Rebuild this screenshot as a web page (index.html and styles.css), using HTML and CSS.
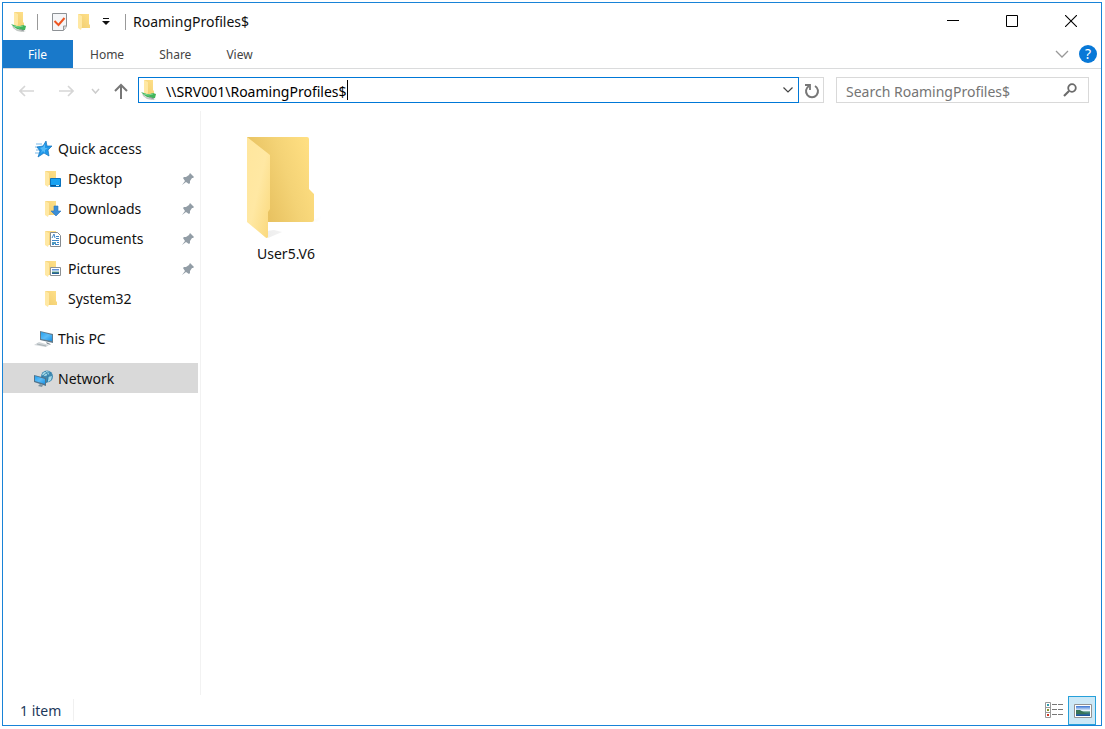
FILE: index.html
```html
<!DOCTYPE html>
<html lang="en">
<head>
<meta charset="utf-8">
<meta name="viewport" content="width=device-width, initial-scale=1">
<title>RoamingProfiles$</title>
<link rel="stylesheet" href="styles.css">
</head>
<body>
<svg class="defs" aria-hidden="true">
  <defs>
    <linearGradient id="back" x1="0" y1="1" x2="1" y2="0"><stop offset="0" stop-color="#f0cd6e"/><stop offset="1" stop-color="#ffe08a"/></linearGradient>
    <linearGradient id="back-large" x1="0" y1=".7" x2="1" y2=".3"><stop offset=".2" stop-color="#e8c261"/><stop offset=".6" stop-color="#f4d376"/><stop offset="1" stop-color="#ffdf82"/></linearGradient>
    <linearGradient id="front" x1="0" y1="0" x2="1" y2="1"><stop offset="0" stop-color="#ffe69d"/><stop offset=".5" stop-color="#ffe8a3"/><stop offset="1" stop-color="#fad87b"/></linearGradient>
    <linearGradient id="shade" x1="0" x2="1"><stop offset="0" stop-color="#d4d4d4"/><stop offset="1" stop-color="#fff"/></linearGradient>
    <linearGradient id="screen" x1="0" y1="0" x2="1" y2="1"><stop offset="0" stop-color="#25a0ef"/><stop offset=".5" stop-color="#5cbcf7"/><stop offset="1" stop-color="#1691e6"/></linearGradient>
    <linearGradient id="sky" x1="0" y1="0" x2="0" y2="1"><stop offset="0" stop-color="#3973d1"/><stop offset=".45" stop-color="#e8f5ff"/><stop offset=".6" stop-color="#4d9175"/><stop offset="1" stop-color="#164da5"/></linearGradient>
    <symbol id="folder" viewBox="0 0 18 18">
      <path d="M1 1h11v10l1 1v3H4z" fill="url(#back)"/>
      <path d="M1 1l4 2v11l-1 3-3-2z" fill="#ffe8a3"/>
    </symbol>
    <symbol id="share" viewBox="0 0 18 20">
      <path d="M3 0h9v10l1 1v3H6z" fill="url(#back)"/>
      <path d="M3 0l4 2v10l-1 3-3-2z" fill="#ffe8a3"/>
      <path d="M1 13l4 4 5 1 5 1-4 1-5-1-4-3z" fill="#c3c8c5"/>
      <path d="M0 12l3 1 3 1 3 0 3-1 3 1-1 4-3 0-5-1-3-2z" fill="#42b55c"/>
      <path d="M3 14l4 1 5-1" fill="none" stroke="#82d893"/>
      <path d="M8 17l5 2" stroke="#92999c"/>
    </symbol>
    <symbol id="pin" viewBox="0 0 14 14">
      <path d="M9 1l4 4-1 1-1 0-2 3v2l-1 1-3-2-4 3 3-4-2-3 1-1h2l3-2z" fill="#929da6"/>
    </symbol>
  </defs>
</svg>
<div class="window">
  <header class="titlebar">
    <div class="quickbar">
      <svg class="share-icon" aria-hidden="true"><use href="#share"/></svg>
      <span class="rule"></span>
      <button class="plain properties" aria-label="Properties">
        <svg width="16" height="18" viewBox="0 0 16 18"><path d="M.5.5h14v13l-3 4H.5z" fill="#f5f6f8" stroke="#8d9195"/><path d="M11.500 17v-4H15" fill="#ddd" stroke="#999"/><path d="M2.500 8l4 4 6-7" fill="none" stroke="#ee5622" stroke-width="2"/></svg>
      </button>
      <button class="plain" aria-label="New folder"><svg class="folder-icon"><use href="#folder"/></svg></button>
      <button class="plain customize" aria-label="Customize toolbar"><svg width="8" height="7" viewBox="0 0 8 7"><path d="M1 .5h6" stroke="#111"/><path d="M0 3h8L4 7z" fill="#111"/></svg></button>
      <span class="rule"></span>
    </div>
    <h1>RoamingProfiles$</h1>
    <div class="controls">
      <button class="plain" aria-label="Minimize"><svg width="12" height="12" viewBox="0 0 12 12"><path d="M0 5.500h12" stroke="#000"/></svg></button>
      <button class="plain" aria-label="Maximize"><svg width="12" height="12" viewBox="0 0 12 12"><path d="M.5.5h11v11H.5z" fill="none" stroke="#000"/></svg></button>
      <button class="plain" aria-label="Close"><svg width="12" height="12" viewBox="0 0 12 12"><path d="M0 0l12 12M12 0L0 12" stroke="#000" stroke-width="1.100"/></svg></button>
    </div>
  </header>
  <nav class="ribbon" aria-label="Ribbon">
    <button class="file">File</button>
    <button>Home</button>
    <button>Share</button>
    <button>View</button>
    <button class="plain expand" aria-label="Expand ribbon"><svg width="14" height="8" viewBox="0 0 14 8"><path d="M1 1l6 6 6-6" fill="none" stroke="#999" stroke-width="1.300"/></svg></button>
    <button class="help" aria-label="Help">?</button>
  </nav>
  <div class="navigation">
    <div class="arrows">
      <button class="plain" aria-label="Back"><svg width="16" height="12" viewBox="0 0 16 12"><path d="M15 6H1M6 1L1 6l5 5" fill="none" stroke="#d6d6d6" stroke-width="1.600"/></svg></button>
      <button class="plain" aria-label="Forward"><svg width="16" height="12" viewBox="0 0 16 12"><path d="M1 6h14M10 1l5 5-5 5" fill="none" stroke="#d6d6d6" stroke-width="1.600"/></svg></button>
      <button class="plain recent" aria-label="Recent locations"><svg width="9" height="6" viewBox="0 0 9 6"><path d="M1 1l3.500 4L8 1" fill="none" stroke="#ccc" stroke-width="1.500"/></svg></button>
      <button class="plain" aria-label="Up"><svg width="14" height="16" viewBox="0 0 14 16"><path d="M7 16V2M1 8l6-6 6 6" fill="none" stroke="#777" stroke-width="2"/></svg></button>
    </div>
    <div class="address">
      <svg class="share-icon" aria-hidden="true"><use href="#share"/></svg>
      <input class="path" type="text" aria-label="Address" value="\\SRV001\RoamingProfiles$">
      <span class="caret"></span>
      <button class="plain history" aria-label="Previous locations"><svg width="10" height="6" viewBox="0 0 10 6"><path d="M.5.5L5 5 9.500.5" fill="none" stroke="#444" stroke-width="1.200"/></svg></button>
    </div>
    <button class="refresh" aria-label="Refresh"><svg width="16" height="16" viewBox="0 0 16 16"><path d="M11 3a6 6 0 1 1-6 0" fill="none" stroke="#777" stroke-width="2"/><path d="M1 2h5v5" fill="none" stroke="#777" stroke-width="1.800"/></svg></button>
    <div class="search">
      <input type="search" aria-label="Search" placeholder="Search RoamingProfiles$">
      <button class="plain" aria-label="Search"><svg width="14" height="14" viewBox="0 0 14 14"><circle cx="9" cy="5" r="3.800" fill="none" stroke="#6b6b6b" stroke-width="1.800"/><path d="M6 8l-5 5" stroke="#6b6b6b" stroke-width="2.200"/></svg></button>
    </div>
  </div>
  <div class="content">
    <nav class="sidebar" aria-label="Locations">
      <a href="#quick" class="item">
        <svg class="icon" viewBox="0 0 18 18"><path d="M2 4h6M1 7h5M2 10h4M1 13h4" stroke="#78b9e8"/><path d="M12 1l1 5 5 0-4 4 1 6-5-3-6 4 2-6-3-4 6-1z" fill="#2097e8" stroke="#1674bd" stroke-width=".7"/><path d="M11 4l0 4 3 0-3 2v3l-2-2-2 2 1-3-2-2 3-1z" fill="#56bbf8"/></svg>
        <span>Quick access</span></a>
      <a href="#desktop" class="item child">
        <svg class="icon" viewBox="0 0 18 18"><use href="#folder" width="18" height="18"/><path d="M6.500 8.500h10v8h-10z" fill="#18a2f2" stroke="#0b73bd"/><path d="M7 15.500h9" stroke="#095694"/><path d="M12 15.500h3" stroke="#c8edff"/></svg>
        <span>Desktop</span><svg class="pin" aria-hidden="true"><use href="#pin"/></svg></a>
      <a href="#downloads" class="item child">
        <svg class="icon" viewBox="0 0 18 18"><use href="#folder" width="18" height="18"/><path d="M10 6h4v5h3l-5 5-5-5h3z" fill="#3c8ed6" stroke="#2d76ba" stroke-width=".6"/></svg>
        <span>Downloads</span><svg class="pin" aria-hidden="true"><use href="#pin"/></svg></a>
      <a href="#documents" class="item child">
        <svg class="icon" viewBox="0 0 18 18"><use href="#folder" width="18" height="18"/><path d="M6.500 2.500h7l3 3v11h-10z" fill="#fff" stroke="#858a8f"/><path d="M8 8l2-4 1 4M12 6.500h3M12 8.500h3M8 10.500h7M8 14.500h2M11 14.500h4" fill="none" stroke="#3f86c7"/><path d="M8 12h4v2H8z" fill="#4f9abf"/><path d="M13 12.500h2" stroke="#3f86c7"/></svg>
        <span>Documents</span><svg class="pin" aria-hidden="true"><use href="#pin"/></svg></a>
      <a href="#pictures" class="item child">
        <svg class="icon" viewBox="0 0 18 18"><use href="#folder" width="18" height="18"/><path d="M6.500 7.500h10v8h-10z" fill="#fff" stroke="#8c9093"/><path d="M8 9h7v5H8z" fill="url(#sky)"/></svg>
        <span>Pictures</span><svg class="pin" aria-hidden="true"><use href="#pin"/></svg></a>
      <a href="#system32" class="item child">
        <svg class="icon" viewBox="0 0 18 18"><use href="#folder" width="18" height="18"/></svg>
        <span>System32</span></a>
      <a href="#pc" class="item group">
        <svg class="icon wide" viewBox="0 0 20 18"><path d="M6 1l13 3v9L6 10z" fill="#627b8c"/><path d="M7 2l11 3v6L7 9z" fill="url(#screen)"/><path d="M12 12l3 1 2 2-4-1z" fill="#8b969d"/><path d="M0 15l5-3 10 3-3 2z" fill="#d2d7da"/><path d="M3 14l9 2" stroke="#aab2b6"/></svg>
        <span>This PC</span></a>
      <a href="#network" class="item group selected" aria-current="page">
        <svg class="icon wide" viewBox="0 0 20 18"><circle cx="13" cy="6.500" r="6" fill="#4089b1"/><path d="M9 3l3-2 4 1-2 3-3 1-3-1M14 7l4-1-1 4-3 2z" fill="#a5d9e8"/><path d="M8 7c3-4 6-5 9-4M11 1c4 4 4 8 1 12" fill="none" stroke="#2878a5" stroke-width=".8"/><path d="M0 5l12 3v8L0 12z" fill="#51738b"/><path d="M1 6l10 3v5L1 11z" fill="url(#screen)"/><path d="M6 14l3 1-1 2-4-1z" fill="#7c929f"/></svg>
        <span>Network</span></a>
    </nav>
    <main class="files">
      <a href="#user5" class="tile">
        <svg width="80" height="106" viewBox="0 0 80 106" aria-hidden="true">
          <path d="M65 86l13-6-7 7zM22 103l14-6-8-2-7 1z" fill="url(#shade)" opacity=".4"/>
          <path d="M1 2h60q2 0 2 2v50l5 5v26q0 2-2 2H22L1 50z" fill="url(#back-large)"/>
          <path d="M1 2l23 18v54l-2 3v25q-1 2-3 0L1 87z" fill="url(#front)"/>
        </svg>
        <span>User5.V6</span>
      </a>
    </main>
  </div>
  <footer class="status">
    <span class="count">1 item</span>
    <button class="view" aria-label="Details view"><svg width="18" height="16" viewBox="0 0 18 16"><path d="M.5.500h5v15h-5zM0 5.500h6M0 10.500h6" fill="none" stroke="#999"/><path d="M2 2h2v2H2z" fill="#319caf"/><path d="M2 7h2v2H2z" fill="#8a952b"/><path d="M2 12h2v2H2z" fill="#cf3825"/><path d="M7 2.500h5M13 2.500h5M7 7.500h5M13 7.500h5M7 12.500h5M13 12.500h5" stroke="#777"/></svg></button>
    <button class="view active" aria-label="Large icons view"><svg width="18" height="14" viewBox="0 0 18 14"><path d="M.5.500h17v13H.5z" fill="#fff" stroke="#929292"/><path d="M2 2h14v10H2z" fill="url(#sky)"/><path d="M2 6l4 0 5 3 5 1H2z" fill="#377459"/></svg></button>
  </footer>
</div>
</body>
</html>
```
FILE: styles.css
```css
* { box-sizing: border-box; }
body {
  margin: 0;
  padding: 2px 3px 3px 2px;
  min-height: 100vh;
  display: flex;
  background: #fff;
  color: #111;
  font: 14px/20px "Noto Sans", "Open Sans", sans-serif;
}
button, input { font: inherit; color: inherit; border: 0; padding: 0; margin: 0; background: none; border-radius: 0; outline: 0; }
button { display: flex; align-items: center; justify-content: center; }
a { color: inherit; text-decoration: none; }
svg { display: block; flex: none; }
.defs { position: absolute; width: 0; height: 0; }
.window { flex: 1; min-width: 0; display: flex; flex-direction: column; border: 1px solid #1883d7; }
.titlebar { display: flex; align-items: center; height: 37px; padding-left: 8px; }
.quickbar { display: flex; align-items: center; }
.share-icon { width: 18px; height: 20px; }
.folder-icon { width: 18px; height: 18px; }
.rule { width: 1px; height: 16px; background: #999; margin-left: 8px; }
.properties { margin: 0 9px 0 14px; }
.customize { width: 22px; }
.titlebar h1 { margin: 0 auto 0 7px; font-size: 14px; font-weight: 400; }
.controls { display: flex; padding-right: 1px; }
.controls button { width: 59px; height: 36px; padding-bottom: 2px; }
.ribbon { display: flex; height: 29px; border-bottom: 1px solid #dadbdc; font-size: 12px; color: #444; }
.ribbon button { padding: 1px 18px 0 17px; }
.ribbon .file { width: 70px; background: #1979ca; color: #fff; }
.ribbon .expand { margin-left: auto; padding: 0 10px; }
.ribbon .help { align-self: center; width: 18px; height: 18px; padding: 0; margin-right: 4px; border-radius: 50%; background: #0878d7; color: #fff; font-size: 14px; }
.navigation { display: flex; padding: 8px 12px 8px 16px; }
.arrows { display: flex; align-items: center; gap: 23px; width: 119px; padding-top: 2px; }
.arrows .recent { margin: 0 -9px 0 -6px; }
.address { flex: 1; min-width: 0; display: flex; align-items: center; height: 26px; border: 1px solid #0078d7; padding-left: 2px; }
.path { field-sizing: content; min-width: 0; height: 24px; margin-left: 7px; padding: 2px 0 0; color: #000; }
.caret { width: 1px; height: 20px; background: #000; }
.history { width: 20px; height: 24px; margin-left: auto; }
.refresh { width: 25px; border: 1px solid #d9d9d9; border-left: 0; padding: 1px 0 0 1px; }
.search { display: flex; align-items: center; width: 253px; margin-left: 12px; border: 1px solid #d9d9d9; padding: 0 11px 0 9px; }
.search input { flex: 1; min-width: 0; height: 24px; padding: 2px 0 0; appearance: none; }
.search input::placeholder { color: #757575; opacity: 1; }
.content { flex: 1; display: flex; }
.sidebar { width: 198px; padding-top: 22px; border-right: 1px solid #f2f2f2; }
.item { display: flex; align-items: center; gap: 6px; height: 30px; margin-right: 2px; padding: 2px 3px 0 31px; }
.child { padding-left: 41px; }
.group { margin-top: 10px; }
.selected { background: #d9d9d9; }
.icon { width: 18px; height: 18px; }
.wide { width: 20px; margin-right: -2px; }
.pin { width: 14px; height: 14px; margin-left: auto; }
.files { flex: 1; padding: 24px 0 0 45px; }
.tile { display: inline-flex; flex-direction: column; align-items: center; gap: 3px; width: 80px; }
.tile svg { align-self: flex-start; }
.status { display: flex; align-items: center; height: 30px; padding: 0 5px 0 17px; color: #1e395b; }
.count { margin-right: auto; padding: 2px 12px 0 0; border-right: 1px solid #f0f0f0; }
.view { width: 28px; height: 29px; }
.active { background: #cce8f6; border: 1px solid #26a0da; padding: 1px 0 0 1px; }
```
